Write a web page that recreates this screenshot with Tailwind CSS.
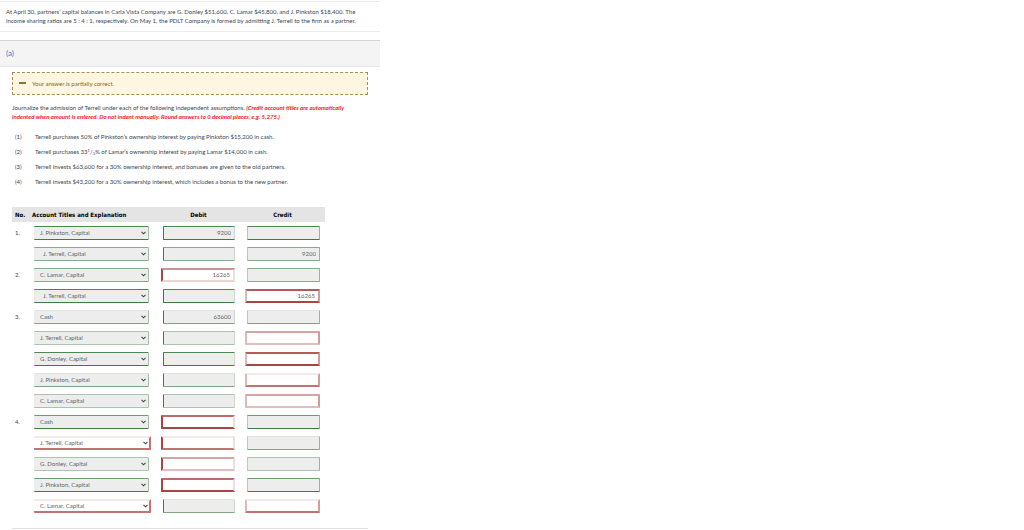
<!DOCTYPE html>
<html lang="en">
<head>
  <meta charset="UTF-8" />
  <meta name="viewport" content="width=device-width, initial-scale=1" />
  <title>Partnership Journal Entries</title>
  <script src="https://cdn.jsdelivr.net/npm/@tailwindcss/browser@4"></script>
</head>
<body class="bg-white font-['Lato',sans-serif] text-[6px] leading-[9px] text-[#3c4650]">
  <main class="w-full max-w-[380px]">
    <!-- Problem statement -->
    <section class="mt-px border-y border-[#ececec] px-[6px] pt-[5px] pb-[6px]">
      <p>
        At April 30, partners’ capital balances in Carla Vista Company are G. Donley $51,600, C. Lamar $45,800, and J. Pinkston $18,400. The<br />
        income sharing ratios are 5 : 4 : 1, respectively. On May 1, the PDLT Company is formed by admitting J. Terrell to the firm as a partner.
      </p>
    </section>

    <!-- Part header -->
    <h2 class="mt-2 border-t border-b border-t-[#d4d4d4] border-b-[#e6e6e6] bg-[#f4f4f4] px-[6px] py-2 text-[8px] leading-[9px] text-[#2f86d6]">(a)</h2>

    <div class="px-3">
      <!-- Status -->
      <div class="mt-[5px] flex items-center gap-[6px] border border-dashed border-[#a58d5f] bg-[#fef6e0] px-[6px] py-[6px] text-[#7d6640]">
        <svg class="h-2 w-[7px] shrink-0" viewBox="0 0 7 8"><rect y="2" width="7" height="2" fill="#8f7144" /></svg>
        <span>Your answer is partially correct.</span>
      </div>

      <p class="mt-2">
        Journalize the admission of Terrell under each of the following independent assumptions.
        <b class="text-[#f5141c] italic">(Credit account titles are automatically<br />
        indented when amount is entered. Do not indent manually. Round answers to 0 decimal places, e.g. 5,275.)</b>
      </p>

      <div class="mt-2 grid grid-cols-[20px_1fr] px-[3px] leading-[15px]">
        <span>(1)</span><span>Terrell purchases 50% of Pinkston’s ownership interest by paying Pinkston $15,200 in cash.</span>
        <span>(2)</span><span>Terrell purchases 33<sup class="text-[4px] leading-none">1</sup>/<sub class="text-[4px] leading-none">3</sub>% of Lamar’s ownership interest by paying Lamar $14,000 in cash.</span>
        <span>(3)</span><span>Terrell invests $63,600 for a 30% ownership interest, and bonuses are given to the old partners.</span>
        <span>(4)</span><span>Terrell invests $43,200 for a 30% ownership interest, which includes a bonus to the new partner.</span>
      </div>

      <!-- Journal -->
      <table class="mt-[18px] w-[313px] table-fixed border-collapse">
        <thead class="bg-[#e4e4e4] font-['DejaVu_Sans_Condensed','Noto_Sans',sans-serif] text-black">
          <tr class="h-[15px]">
            <th class="w-5 pl-[3px] text-left">No.</th>
            <th class="w-[125px] text-left">Account Titles and Explanation</th>
            <th class="w-[83px] text-center">Debit</th>
            <th class="w-[85px] text-center">Credit</th>
          </tr>
        </thead>
        <tbody id="journal"></tbody>
      </table>
      <hr class="mt-3 border-[#e2e2e2]" />
    </div>
  </main>

  <script>
    const accounts = ['Cash', 'C. Lamar, Capital', 'G. Donley, Capital', 'J. Pinkston, Capital', 'J. Terrell, Capital'];

    // top and bottom edge of a field, right and wrong answers
    const good = {
      dark: 'border-t-[#4d8650] border-b-[#3f7b42]',
      mid: 'border-t-[#86ab88] border-b-[#86ab88]',
      light: 'border-t-[#abc4ac] border-b-[#abc4ac]',
      fade: 'border-t-[#dde5dd] border-b-[#7fa681]',
      deep: 'border-t-[#6f9c71] border-b-[#3f7b42]'
    };
    const bad = {
      dark: 'border-t-[#b55a58] border-b-[#a94442]',
      mid: 'border-t-[#cf9291] border-b-[#edd3d2]',
      light: 'border-t-[#d9a3a2] border-b-[#e3bdbc]',
      fade: 'border-t-[#f4e8e8] border-b-[#c27270]',
      deep: 'border-t-[#bd6b69] border-b-[#a94442]'
    };

    // no, account, indent, debit, credit, edge, wrong fields (a = account, d = debit, c = credit)
    const rows = [
      ['1.', 'J. Pinkston, Capital', 0, '9200', '', 'dark', ''],
      ['', 'J. Terrell, Capital', 1, '', '9200', 'mid', ''],
      ['2.', 'C. Lamar, Capital', 0, '16265', '', 'mid', 'd'],
      ['', 'J. Terrell, Capital', 1, '', '16265', 'dark', 'c'],
      ['3.', 'Cash', 0, '63600', '', 'fade', ''],
      ['', 'J. Terrell, Capital', 0, '', '', 'light', 'c'],
      ['', 'G. Donley, Capital', 0, '', '', 'dark', 'c'],
      ['', 'J. Pinkston, Capital', 0, '', '', 'fade', 'c'],
      ['', 'C. Lamar, Capital', 0, '', '', 'light', 'c'],
      ['4.', 'Cash', 0, '', '', 'deep', 'd'],
      ['', 'J. Terrell, Capital', 0, '', '', 'fade', 'ad'],
      ['', 'G. Donley, Capital', 0, '', '', 'light', 'd'],
      ['', 'J. Pinkston, Capital', 0, '', '', 'deep', 'd'],
      ['', 'C. Lamar, Capital', 0, '', '', 'fade', 'ac']
    ];

    function picker(name, indent, edge, wrong, n) {
      const box = wrong ? 'w-[117px] border-y-2 border-r-2 border-r-[#c27270] bg-white ' + bad[edge]
                        : 'w-[115px] border-y border-r border-r-[#a3c0a4] bg-[#ededed] ' + good[edge];
      return `<div class="relative w-fit">
        <select aria-label="Account, line ${n}" class="block h-[14px] appearance-none rounded-[1px] ${indent ? 'pl-[9px]' : 'pl-[6px]'} text-[#636363] ${box}">
          ${accounts.map(a => `<option ${a === name ? 'selected' : ''}>${a}</option>`).join('')}
        </select>
        <svg class="pointer-events-none absolute top-[5px] right-[3px] h-1 w-[5px]" viewBox="0 0 5 4" fill="none" stroke="#444" stroke-width="1.1"><path d="M.5 .8 2.5 2.8 4.5 .8" /></svg>
      </div>`;
    }

    function amount(value, side, edge, wrong, n) {
      const debit = side === 'Debit';
      let box;
      if (wrong) {
        box = 'border-2 bg-white pr-[3px] ' + bad[edge] + (debit ? ' w-[74px] border-l-[#a94442] border-r-[#f0dddd]' : ' w-[75px] border-l-[#e0b8b8] border-r-[#d59b9a]');
      } else {
        box = 'border bg-[#ededed] pr-[3px] ' + good[edge] + (debit ? ' w-[72px] border-l-[#3f7b42] border-r-[#cdd8cd]' : ' w-[73px] border-l-[#b5cbb6] border-r-[#96b697]');
      }
      return `<input type="text" value="${value}" aria-label="${side}, line ${n}" class="ml-auto block h-[14px] rounded-[1px] text-right text-[#636363] ${box}" />`;
    }

    document.getElementById('journal').innerHTML = rows.map(([no, name, indent, debit, credit, edge, wrong], i) => `
      <tr class="h-[21px]">
        <td class="pl-[3px]">${no}</td>
        <td class="pl-[2px]">${picker(name, indent, edge, wrong.includes('a'), i + 1)}</td>
        <td class="pr-[5px]">${amount(debit, 'Debit', edge, wrong.includes('d'), i + 1)}</td>
        <td class="pr-[5px]">${amount(credit, 'Credit', edge, wrong.includes('c'), i + 1)}</td>
      </tr>`).join('');
  </script>
</body>
</html>
